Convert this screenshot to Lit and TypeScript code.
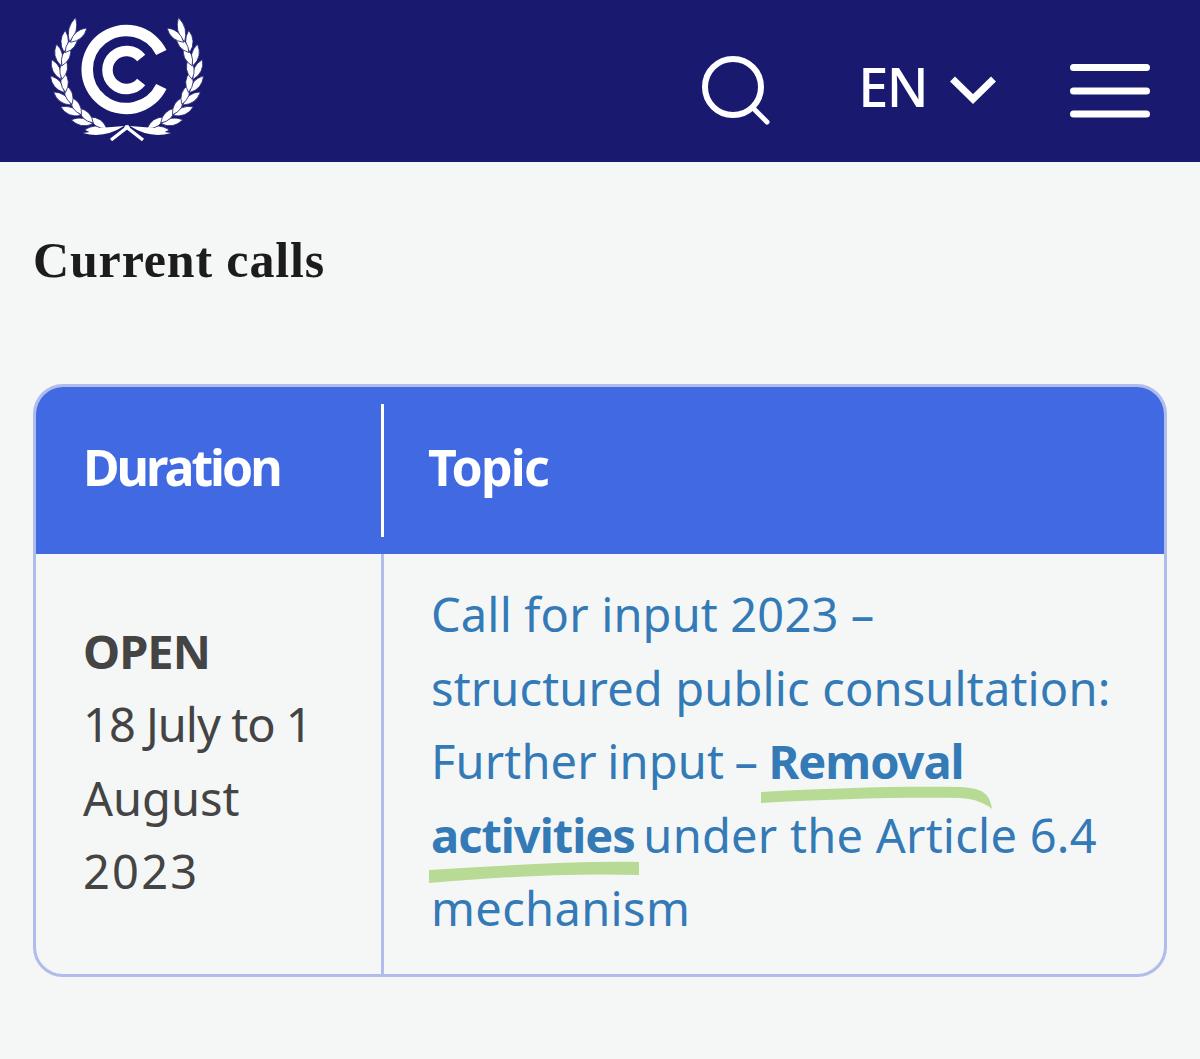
import { LitElement, html, css, svg } from "lit";
import { customElement } from "lit/decorators.js";

const RX = 66, RY = 60;

function leaf(t: number, tilt: number, len: number, w: number, off: number) {
  const a = (t * Math.PI) / 180;
  const x = RX * Math.cos(a) + off * Math.cos(a), y = RY * Math.sin(a) + off * Math.sin(a);
  const d = Math.atan2(-RY * Math.cos(a), RX * Math.sin(a)) + (tilt * Math.PI) / 180;
  const tx = x + len * Math.cos(d), ty = y + len * Math.sin(d);
  const mx = (x + tx) / 2, my = (y + ty) / 2;
  const nx = -Math.sin(d) * w, ny = Math.cos(d) * w;
  const f = (n: number) => n.toFixed(1);
  return `M${f(x)} ${f(y)}Q${f(mx + nx)} ${f(my + ny)} ${f(tx)} ${f(ty)}Q${f(mx - nx)} ${f(my - ny)} ${f(x)} ${f(y)}Z`;
}

const STEPS = [72, 59, 46, 33, 20, 7, -6, -19, -30];
const wreath = STEPS.flatMap((t, i) => {
  const last = i === STEPS.length - 1;
  return [leaf(t, 18, last ? 25 : 22, 7.5, 0.5), leaf(t, -17, last ? 22 : 21, 7.5, -0.5)];
});

@customElement("app-root")
export class AppRoot extends LitElement {
  static styles = css`
    :host { display: block; width: 1200px; height: 1059px; background: #f5f7f7; overflow: hidden; font-family: "Noto Sans", sans-serif; }
    .top { height: 162px; background: #191970; display: flex; align-items: center; padding: 0 50px 0 45px; box-sizing: border-box; }
    .logo { width: 164px; height: 162px; display: block; }
    .spacer { flex: 1; }
    .search { width: 72px; height: 72px; display: block; margin-top: 20px; }
    .lang { display: flex; align-items: center; margin-left: 85.5px; color: #fff; font-size: 54px; font-weight: 500; line-height: 54px; letter-spacing: -1.6px; margin-top: 10px; }
    .chev { width: 50px; height: 34px; margin-left: 21px; margin-top: 6px; display: block; }
    .menu { width: 80px; height: 54px; margin-left: 72px; margin-top: 20px; display: block; }
    h1 { margin: 0; padding: 72px 0 0 33px; font: 700 50px/52px "Liberation Serif", serif; letter-spacing: 0.85px; color: #1c1c1c; height: 149px; box-sizing: border-box; }
    .card { margin: 73px 33px 0; height: 593px; box-sizing: border-box; border: 3px solid #b0bdec; border-radius: 30px; display: grid; grid-template-columns: 348px 1fr; grid-template-rows: 167px 1fr; overflow: hidden; }
    .th { background: #4169e1; color: #fff; font-weight: 700; font-size: 50px; letter-spacing: -3px; display: flex; align-items: center; padding-bottom: 8px; box-sizing: border-box; }
    .th.a { padding-left: 47px; position: relative; }
    .th.a::after { content: ""; position: absolute; right: 0; top: 17px; bottom: 17px; width: 3px; background: #fff; }
    .th.b { padding-left: 44px; letter-spacing: -1.8px; }
    .td { font-size: 47px; line-height: 73.5px; display: flex; flex-direction: column; justify-content: center; box-sizing: border-box; }
    .td.a { padding: 0 0 5px 47px; color: #444; border-right: 3px solid #b0bdec; }
    .td.b { padding: 0 0 4px 47px; color: #337ab7; position: relative; letter-spacing: 0.15px; }
    .td b { font-weight: 700; letter-spacing: -1px; }
    .tight { letter-spacing: -1px; }
    .wide { letter-spacing: 2.2px; }
    .l3 { word-spacing: -2px; }
    .l4 { letter-spacing: 0.25px; }
    .l4 b { margin-right: -4px; }
    .l5 { letter-spacing: 0.35px; }
    .mark { position: absolute; left: 0; top: 0; width: 780px; height: 420px; filter: blur(0.5px); }
  `;

  render() {
    return html`
      <div class="top">
        <svg class="logo" viewBox="45 0 164 162">
          <g transform="translate(127 72)" fill="#fff" stroke="#191970" stroke-width="0.8">${wreath.map((d) => svg`<path d=${d}></path>`)}</g>
          <g transform="translate(127 72) scale(-1 1)" fill="#fff" stroke="#191970" stroke-width="0.8">${wreath.map((d) => svg`<path d=${d}></path>`)}</g>
          <path d="M83 133Q104 139 124 126L87 129Q100 131 83 133ZM171 133Q150 139 130 126L167 129Q154 131 171 133Z" fill="#fff"></path>
          <path d="M125 126L143 140M129 126L111 140" fill="none" stroke="#fff" stroke-width="3.4"></path>
          <path d="M161.3 52.5A39 39 0 1 0 161.3 86.5" fill="none" stroke="#fff" stroke-width="11.5"></path>
          <path d="M141.2 58A19 19 0 1 0 141.2 82" fill="none" stroke="#fff" stroke-width="10.5"></path>
        </svg>
        <div class="spacer"></div>
        <svg class="search" viewBox="0 0 72 72" fill="none" stroke="#fff" stroke-width="6" stroke-linecap="round">
          <circle cx="32" cy="32" r="28"></circle>
          <path d="M52 53L66 67" stroke-width="5"></path>
        </svg>
        <div class="lang">EN
          <svg class="chev" viewBox="0 0 50 34" fill="none" stroke="#fff" stroke-width="7"><path d="M4.5 7L25 27L45.5 7"></path></svg>
        </div>
        <svg class="menu" viewBox="0 0 80 54" stroke="#fff" stroke-width="7" stroke-linecap="round">
          <path d="M3.5 3.5H76.5M3.5 27H76.5M3.5 50H76.5"></path>
        </svg>
      </div>
      <h1>Current calls</h1>
      <div class="card">
        <div class="th a">Duration</div>
        <div class="th b">Topic</div>
        <div class="td a">
          <span><b>OPEN</b></span>
          <span class="tight">18 July to 1</span>
          <span>August</span>
          <span class="wide">2023</span>
        </div>
        <div class="td b">
          <span>Call for input 2023 –</span>
          <span>structured public consultation:</span>
          <span class="l3">Further input – <b>Removal</b></span>
          <span class="l4"><b>activities</b> under the Article 6.4</span>
          <span class="l5">mechanism</span>
          <svg class="mark" viewBox="384 554 780 420" fill="#b7da95">
            <path d="M761 792C830 788 900 786 960 787C980 788 990 792 992 809C985 803 975 799 960 798C900 797 830 799 761 803Z"></path>
            <path d="M429 870C500 866 570 861 639 862L639 875C570 873 500 877 429 883Z"></path>
          </svg>
        </div>
      </div>
    `;
  }
}
